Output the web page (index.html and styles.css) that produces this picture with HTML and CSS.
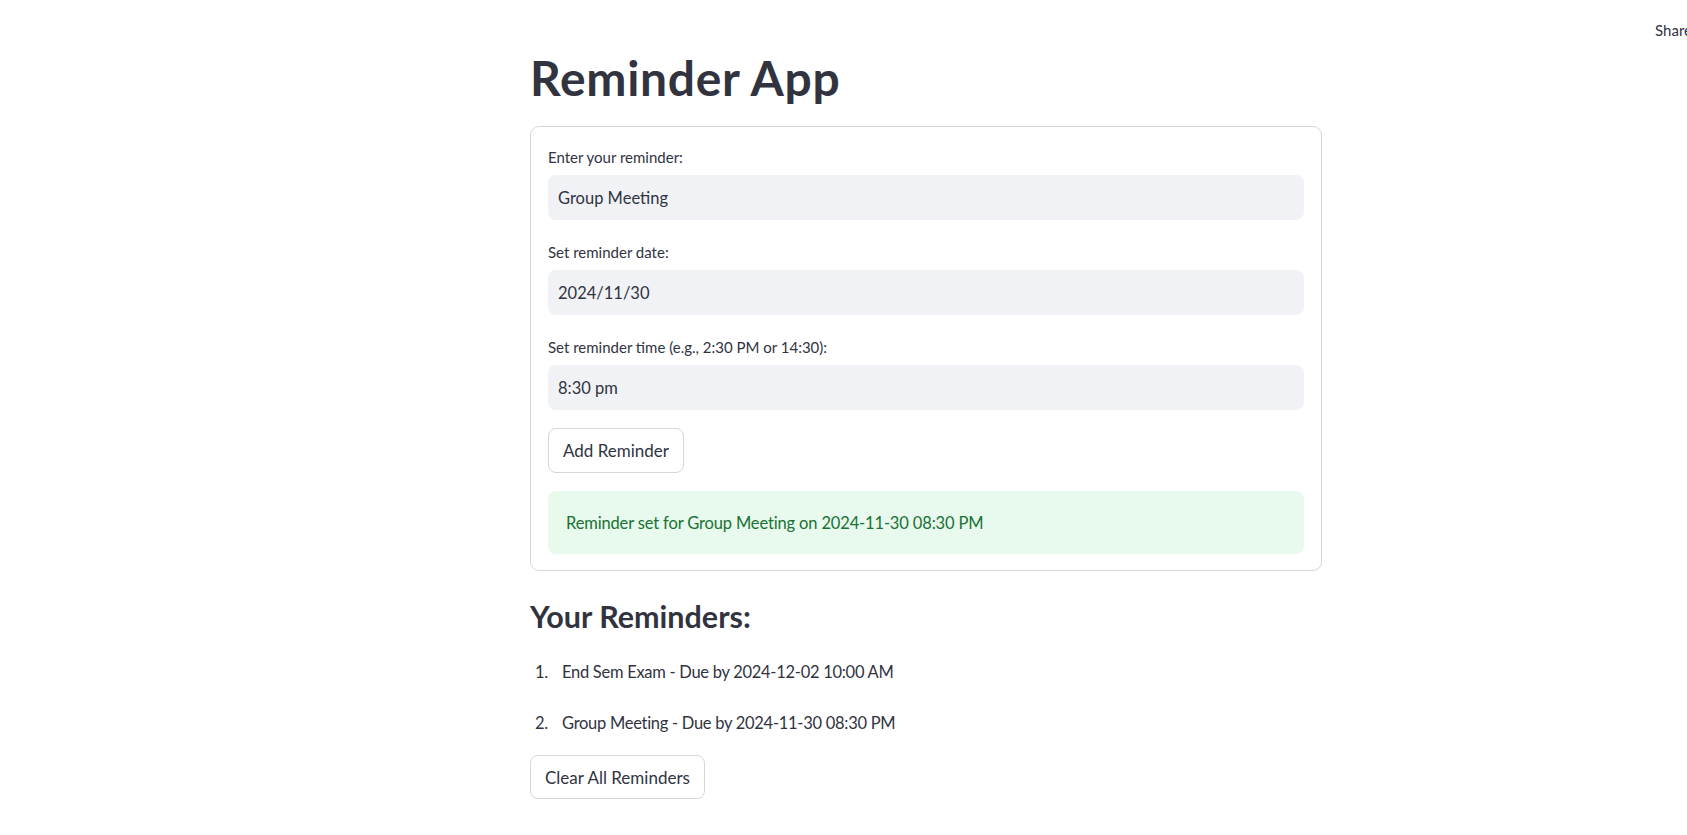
FILE: index.html
```
<!DOCTYPE html>
<html lang="en">
<head>
<meta charset="utf-8">
<title>Reminder App</title>
<link rel="stylesheet" href="styles.css">
</head>
<body>
<header class="topbar"><span class="share">Share</span></header>
<main class="main">
  <h1 class="title">Reminder App</h1>
  <section class="card">
    <div class="field">
      <label class="label">Enter your reminder:</label>
      <div class="input">Group Meeting</div>
    </div>
    <div class="field">
      <label class="label">Set reminder date:</label>
      <div class="input">2024/11/30</div>
    </div>
    <div class="field">
      <label class="label">Set reminder time (e.g., 2:30 PM or 14:30):</label>
      <div class="input">8:30 pm</div>
    </div>
    <div class="row"><button class="btn">Add Reminder</button></div>
    <div class="success">Reminder set for Group Meeting on 2024-11-30 08:30 PM</div>
  </section>
  <h3 class="subtitle">Your Reminders:</h3>
  <ol class="list">
    <li class="item"><span class="num">1.</span><span>End Sem Exam - Due by 2024-12-02 10:00 AM</span></li>
    <li class="item"><span class="num">2.</span><span>Group Meeting - Due by 2024-11-30 08:30 PM</span></li>
  </ol>
  <div class="row"><button class="btn btn-clear">Clear All Reminders</button></div>
</main>
</body>
</html>
```
FILE: styles.css
```
html, body {
  margin: 0;
  padding: 0;
  background: #ffffff;
  overflow: hidden;
}
body {
  font-family: Lato, "Noto Sans", sans-serif;
  color: #31333f;
  width: 1687px;
  height: 835px;
  position: relative;
}
.topbar {
  position: absolute;
  top: 0;
  left: 0;
  right: 0;
  height: 58px;
  display: flex;
  align-items: center;
  justify-content: flex-end;
  overflow: hidden;
}
.share {
  font-size: 15px;
  margin-right: -5px;
  color: #31333f;
  padding-top: 2px;
}
.main {
  margin-left: 530px;
  width: 792px;
  padding-top: 50px;
  display: flex;
  flex-direction: column;
}
.title {
  margin: 0 0 20px;
  font-size: 48px;
  line-height: 56px;
  font-weight: 700;
  letter-spacing: 0.7px;
}
.card {
  border: 1px solid #d6d6d9;
  border-radius: 9px;
  padding: 16px 17px;
  display: flex;
  flex-direction: column;
  gap: 18px;
}
.field {
  display: flex;
  flex-direction: column;
}
.label {
  font-size: 15px;
  line-height: 20px;
  padding-top: 4px;
  margin-bottom: 8px;
}
.input {
  height: 45px;
  background: #f0f2f6;
  border-radius: 8px;
  display: flex;
  align-items: center;
  padding: 0 10px;
  font-size: 16.5px;
}
.row {
  display: flex;
}
.btn {
  font-family: inherit;
  font-size: 17px;
  color: #31333f;
  background: #ffffff;
  border: 1px solid #d6d6d9;
  border-radius: 8px;
  height: 45px;
  padding: 0 14px;
}
.btn-clear {
  height: 44px;
}
.success {
  height: 63px;
  box-sizing: border-box;
  background: #e8f9ee;
  color: #177233;
  border-radius: 8px;
  display: flex;
  align-items: center;
  padding: 0 18px;
  font-size: 16.5px;
  letter-spacing: -0.15px;
}
.subtitle {
  margin: 27px 0 0;
  font-size: 30.5px;
  line-height: 36px;
  font-weight: 700;
}
.list {
  list-style: none;
  margin: 25px 0 0;
  padding: 0;
  display: flex;
  flex-direction: column;
  gap: 24px;
}
.item {
  display: flex;
  font-size: 16.5px;
  line-height: 27px;
  letter-spacing: -0.28px;
}
.num {
  width: 32px;
  padding-left: 5px;
  box-sizing: border-box;
}
.list + .row {
  margin-top: 18px;
}
```
